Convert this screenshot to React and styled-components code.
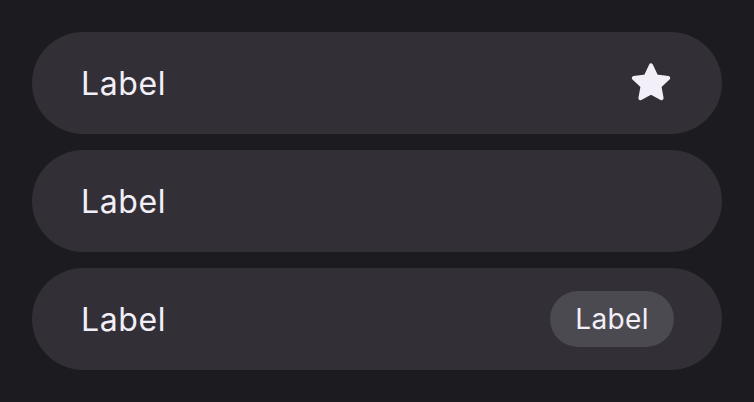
import React from "react";
import styled, { createGlobalStyle } from "styled-components";

const GlobalStyle = createGlobalStyle`
  body {
    margin: 0;
    background: #1c1b1f;
    font-family: Inter, "Noto Sans", sans-serif;
  }
`;

const List = styled.div`
  display: flex;
  flex-direction: column;
  gap: 16px;
  padding: 32px;
  width: 690px;
`;

const Row = styled.div`
  display: flex;
  align-items: center;
  justify-content: space-between;
  height: 102px;
  padding: 0 48px 0 49px;
  border-radius: 51px;
  background: #323036;
  box-sizing: border-box;
`;

const Text = styled.span`
  color: #f3eff8;
  font-size: 32px;
  letter-spacing: 0.6px;
`;

const Badge = styled.span`
  display: flex;
  align-items: center;
  justify-content: center;
  height: 56px;
  padding: 0 25px;
  border-radius: 28px;
  background: #4b4a50;
  color: #f3eff8;
  font-size: 28px;
  letter-spacing: 0.4px;
`;

const StarWrap = styled.span`
  display: flex;
  margin-right: -1px;
`;

const Star = () => (
  <svg width="48" height="48" viewBox="0 0 24 24">
    <path
      d="M12 3.2l2.6 5.5 6 0.8-4.4 4.1 1.1 6-5.3-2.9-5.3 2.9 1.1-6L3.4 9.5l6-0.8z"
      fill="#f3eff8"
      stroke="#f3eff8"
      strokeWidth="2"
      strokeLinejoin="round"
    />
  </svg>
);

export default function App() {
  return (
    <>
      <GlobalStyle />
      <List>
        <Row>
          <Text>Label</Text>
          <StarWrap>
            <Star />
          </StarWrap>
        </Row>
        <Row>
          <Text>Label</Text>
        </Row>
        <Row>
          <Text>Label</Text>
          <Badge>Label</Badge>
        </Row>
      </List>
    </>
  );
}
